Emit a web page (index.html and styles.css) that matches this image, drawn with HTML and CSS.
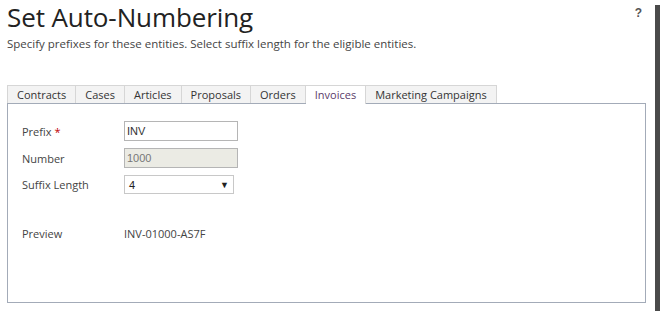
FILE: index.html
```html
<!DOCTYPE html>
<html lang="en">
<head>
  <meta charset="UTF-8">
  <title>Set Auto-Numbering</title>
  <link rel="stylesheet" href="styles.css">
</head>
<body>

<div class="frame">
  <div class="page">
    <div class="header">
      <h1>Set Auto-Numbering</h1>
      <span class="help">?</span>
    </div>
    <p class="intro">Specify prefixes for these entities. Select suffix length for the eligible entities.</p>

    <div class="tabs">
      <span class="tab">Contracts</span>
      <span class="tab">Cases</span>
      <span class="tab">Articles</span>
      <span class="tab">Proposals</span>
      <span class="tab">Orders</span>
      <span class="tab active">Invoices</span>
      <span class="tab">Marketing Campaigns</span>
    </div>

    <div class="panel">
      <div class="row">
        <label>Prefix <span class="req">*</span></label>
        <div class="field">INV</div>
      </div>
      <div class="row">
        <label>Number</label>
        <div class="field disabled">1000</div>
      </div>
      <div class="row">
        <label>Suffix Length</label>
        <div class="select"><span>4</span><span class="arrow">&#9660;</span></div>
      </div>
      <div class="row preview">
        <label>Preview</label>
        <span class="value">INV-01000-AS7F</span>
      </div>
    </div>
  </div>
</div>

</body>
</html>
```

FILE: styles.css
```css
body {
  margin: 0;
  font-family: "Open Sans", "Noto Sans", sans-serif;
  background: #fff;
}

.frame {
  width: 655px;
  height: 311px;
  background: #fff;
  box-shadow: 5px 5px 0 #4a4a4a;
}

.page {
  padding: 0 9px 0 7px;
}

.header {
  display: flex;
  justify-content: space-between;
  align-items: flex-start;
}

h1 {
  margin: 0;
  font-size: 26px;
  font-weight: 400;
  color: #222;
  line-height: 34px;
  letter-spacing: -0.1px;
}

.help {
  font-family: "Liberation Sans", Arial, sans-serif;
  font-weight: bold;
  font-size: 12px;
  color: #555;
  margin: 6px 4px 0 0;
}

.intro {
  margin: 1px 0 0 0;
  font-size: 11.5px;
  color: #444;
  line-height: 18px;
}

.tabs {
  display: flex;
  margin-top: 32px;
  height: 18px;
  border-bottom: 1px solid #a3abb8;
}

.tab {
  font-size: 11px;
  color: #333;
  background: #f3f3f3;
  border: 1px solid #d6d6d6;
  border-bottom: none;
  border-left: none;
  padding: 0 9px;
  line-height: 17px;
}

.tab:first-child {
  border-left: 1px solid #d6d6d6;
}

.tab.active {
  background: #fff;
  color: #5b3b6a;
  height: 18px;
  margin-bottom: -1px;
}

.panel {
  border: 1px solid #a3abb8;
  border-top: none;
  height: 181px;
  padding: 17px 14px 0 14px;
}

.row {
  display: flex;
  align-items: center;
  margin-bottom: 7px;
}

.row label {
  width: 102px;
  font-size: 11px;
  color: #444;
}

.req {
  color: #c00000;
}

.field {
  width: 110px;
  height: 18px;
  border: 1px solid #b5b5b5;
  font-family: "Liberation Sans", Arial, sans-serif;
  font-size: 11px;
  color: #333;
  line-height: 18px;
  padding-left: 2px;
}

.field.disabled {
  background: #ebebe4;
  color: #777;
}

.select {
  width: 100px;
  height: 17px;
  border: 1px solid #c8c8c8;
  display: flex;
  justify-content: space-between;
  align-items: center;
  padding: 0 4px;
  font-family: "Liberation Sans", Arial, sans-serif;
  font-size: 11px;
  color: #222;
}

.arrow {
  font-size: 9px;
}

.preview {
  margin-top: 32px;
}

.preview .value {
  font-size: 11px;
  color: #444;
}
```
